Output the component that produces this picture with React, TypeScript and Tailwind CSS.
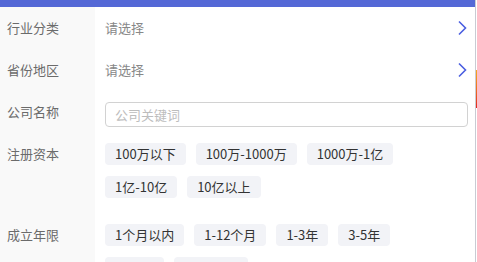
const font = { fontFamily: '"Noto Sans CJK SC", "Noto Sans", sans-serif' };

function Chevron() {
  return (
    <svg width="10" height="16" viewBox="0 0 10 16" className="shrink-0">
      <path d="M2 1.5 L8.5 8 L2 14.5" fill="none" stroke="#4a5ee0" strokeWidth="1.6" />
    </svg>
  );
}

function Chip({ text }: { text: string }) {
  return (
    <span className="h-[22px] px-[10px] rounded bg-[#f2f3f7] text-[13px] leading-[22px] text-[#333] whitespace-nowrap">
      {text}
    </span>
  );
}

function Label({ text, className = "" }: { text: string; className?: string }) {
  return (
    <div className={`w-[95px] shrink-0 bg-[#f9f9f9] pl-[7px] text-[13px] text-[#6b6b6b] ${className}`}>
      {text}
    </div>
  );
}

function ChipRows({ rows }: { rows: string[][] }) {
  return (
    <div className="flex flex-col gap-y-[11px]">
      {rows.map((row, i) => (
        <div key={i} className="flex gap-x-[10px]">
          {row.map((t) => (
            <Chip key={t} text={t} />
          ))}
        </div>
      ))}
    </div>
  );
}

export default function App() {
  return (
    <div className="w-[477px] h-[262px] overflow-hidden bg-white flex" style={font}>
      <div className="flex-1 flex flex-col">
        <div className="h-[7px] shrink-0 bg-[#5468d6]" />
        <div className="flex h-[42px] shrink-0">
          <Label text="行业分类" className="flex items-center" />
          <div className="flex-1 flex items-center justify-between pl-[10px] pr-[8px] text-[13px] text-[#888]">
            <span>请选择</span>
            <Chevron />
          </div>
        </div>
        <div className="flex h-[42px] shrink-0">
          <Label text="省份地区" className="flex items-center" />
          <div className="flex-1 flex items-center justify-between pl-[10px] pr-[8px] text-[13px] text-[#888]">
            <span>请选择</span>
            <Chevron />
          </div>
        </div>
        <div className="flex shrink-0">
          <Label text="公司名称" className="pt-[11px] leading-[20px]" />
          <div className="flex-1 pl-[10px] pr-[7px] pt-[11px] pb-[16px]">
            <div className="h-[25px] border border-[#d2d2d2] rounded-[4px] flex items-center px-[9px] text-[13px] text-[#bdbdbd]">
              公司关键词
            </div>
          </div>
        </div>
        <div className="flex shrink-0">
          <Label text="注册资本" className="leading-[22px]" />
          <div className="flex-1 pl-[10px] pr-[7px] pb-[26px]">
            <ChipRows
              rows={[
                ["100万以下", "100万-1000万", "1000万-1亿"],
                ["1亿-10亿", "10亿以上"],
              ]}
            />
          </div>
        </div>
        <div className="flex flex-1 shrink-0">
          <Label text="成立年限" className="leading-[22px]" />
          <div className="flex-1 pl-[10px] pr-[7px]">
            <ChipRows
              rows={[
                ["1个月以内", "1-12个月", "1-3年", "3-5年"],
                ["5-10年", "10年以上"],
              ]}
            />
          </div>
        </div>
      </div>
      <div className="w-[2px] border-l border-[#c9cbd3] flex flex-col">
        <div className="h-[70px]" />
        <div className="h-[38px] bg-gradient-to-b from-[#f5a623] to-[#e02020]" />
      </div>
    </div>
  );
}
